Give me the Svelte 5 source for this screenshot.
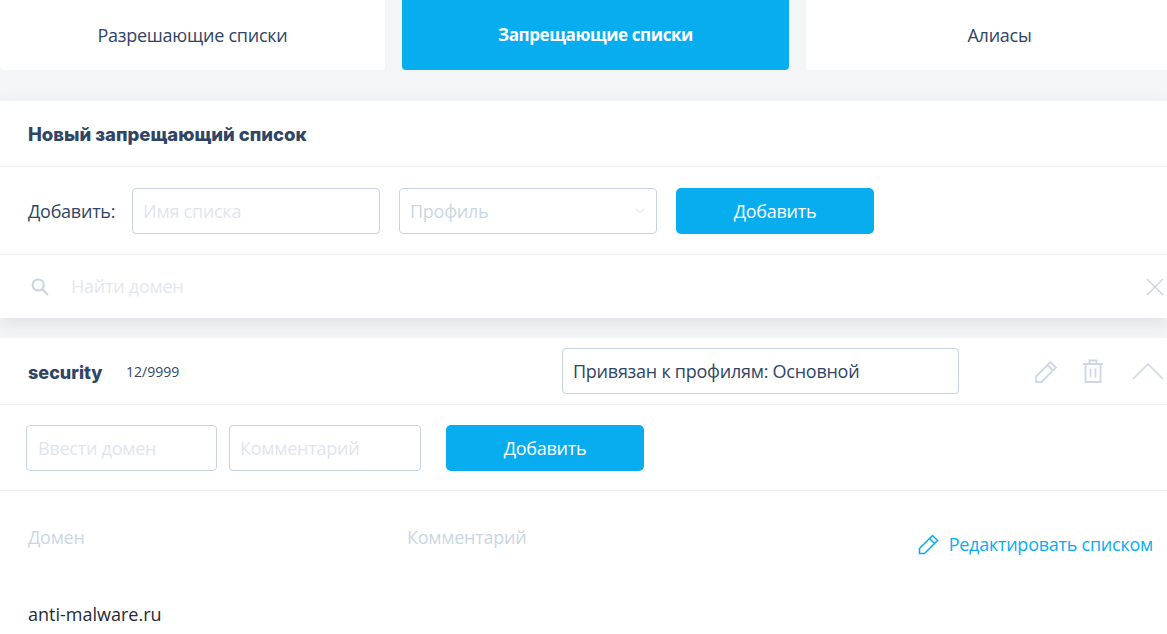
<script>
  const tabs = [
    { label: 'Разрешающие списки', active: false },
    { label: 'Запрещающие списки', active: true },
    { label: 'Алиасы', active: false }
  ]
</script>

<div class="page">
  <div class="tabs">
    {#each tabs as tab}
      <div class="tab" class:active={tab.active}>{tab.label}</div>
    {/each}
  </div>

  <section class="card new-list">
    <div class="title-row">
      <h2>Новый запрещающий список</h2>
    </div>
    <div class="add-row">
      <span class="add-label">Добавить:</span>
      <input class="field name" placeholder="Имя списка" />
      <div class="field select">
        <span>Профиль</span>
        <svg width="12" height="8" viewBox="0 0 12 8"><path d="M1.5 1.5 6 6l4.5-4.5" fill="none" stroke="#e3e8f0" stroke-width="1.2" /></svg>
      </div>
      <button class="btn wide">Добавить</button>
    </div>
    <div class="search-row">
      <svg class="search-icon" width="20" height="20" viewBox="0 0 20 20">
        <circle cx="8.2" cy="8" r="5.6" fill="none" stroke="#c9d4e3" stroke-width="2" />
        <path d="M12.2 12.2 18 18" fill="none" stroke="#c9d4e3" stroke-width="2" />
      </svg>
      <span class="search-text">Найти домен</span>
      <svg class="close" width="18" height="18" viewBox="0 0 18 18">
        <path d="M1 1l16 16M17 1 1 17" fill="none" stroke="#c9d4e3" stroke-width="1.4" />
      </svg>
    </div>
  </section>

  <section class="card list">
    <div class="list-head">
      <strong class="list-name">security</strong>
      <span class="count">12/9999</span>
      <div class="field bound">Привязан к профилям: Основной</div>
      <div class="icons">
        <svg width="24" height="24" viewBox="0 0 24 24">
          <path d="M2 17.5 16.5 3 22 8.5 7.500 23H2ZM13.500 6l5.500 5.500" fill="none" stroke="#cdd7e5" stroke-width="1.8" />
        </svg>
        <svg class="trash" width="20" height="24" viewBox="0 0 20 24">
          <path d="M0 5h20M6.500 5V1.500h7V5M2.500 5v18h15V5M7.500 9.500v9M12.500 9.500v9" fill="none" stroke="#cdd7e5" stroke-width="1.800" />
        </svg>
        <svg class="chev" width="32" height="18" viewBox="0 0 32 18">
          <path d="M1 17 16 2l15 15" fill="none" stroke="#cdd7e5" stroke-width="1.500" />
        </svg>
      </div>
    </div>
    <div class="domain-row">
      <input class="field domain" placeholder="Ввести домен" />
      <input class="field comment" placeholder="Комментарий" />
      <button class="btn">Добавить</button>
    </div>
    <div class="table-head">
      <span class="col-domain">Домен</span>
      <span class="col-comment">Комментарий</span>
      <a class="edit" href="#edit">
        <svg width="22" height="22" viewBox="0 0 22 22">
          <path d="M1.500 15.500 14.500 2.500 19.500 7.500 6.500 20.500H1.500ZM11.500 5.500l5 5" fill="none" stroke="#08adef" stroke-width="1.500" />
        </svg>
        Редактировать списком
      </a>
    </div>
    <div class="domain-item">anti-malware.ru</div>
  </section>
</div>

<style>
  :global(body) {
    margin: 0;
    background: #f4f5f7;
    font-family: 'Open Sans', 'Noto Sans', sans-serif;
    overflow: hidden;
  }

  .page {
    height: 634px;
    overflow: hidden;
    font-size: 18px;
    letter-spacing: -0.25px;
    color: #2f4565;
  }

  .tabs {
    display: grid;
    grid-template-columns: 385px 387px 387px;
    gap: 17px;
    margin-bottom: 31px;
  }

  .tab {
    height: 70px;
    line-height: 70px;
    text-align: center;
    background: #fff;
    border-radius: 0 0 4px 4px;
    color: #2f4565;
  }

  .tab.active {
    background: #08adef;
    color: #fff;
    font-size: 17px;
    font-weight: 700;
    letter-spacing: -0.4px;
  }

  .card {
    background: #fff;
  }

  .new-list {
    box-shadow: 0 6px 16px rgba(40, 60, 90, 0.1);
    margin-bottom: 20px;
  }

  .title-row {
    height: 65px;
    padding-left: 28px;
    display: flex;
    align-items: center;
    border-bottom: 1px solid #ebeef2;
  }

  h2 {
    margin: 0;
    font-family: Inter, sans-serif;
    font-size: 18.5px;
    font-weight: 800;
    letter-spacing: 0;
    color: #2f4565;
  }

  .add-row {
    height: 88px;
    box-sizing: border-box;
    padding-left: 28px;
    display: flex;
    align-items: center;
    border-bottom: 1px solid #ebeef2;
  }

  .add-label {
    width: 104px;
  }

  .field {
    box-sizing: border-box;
    height: 46px;
    padding: 0 10px;
    border: 1px solid #c5d2e3;
    border-radius: 4px;
    background: #fff;
    font: inherit;
    letter-spacing: inherit;
    color: #2f4565;
    outline: none;
  }

  .field::placeholder {
    color: #dfe5ef;
    opacity: 1;
  }

  .name {
    width: 248px;
    margin-right: 19px;
  }

  .select {
    width: 258px;
    margin-right: 19px;
    display: flex;
    align-items: center;
    justify-content: space-between;
    color: #cbd6e5;
  }

  .btn {
    width: 198px;
    height: 46px;
    border: none;
    border-radius: 5px;
    background: #08adef;
    color: #fff;
    font: inherit;
    letter-spacing: inherit;
  }

  .search-row {
    height: 63px;
    padding: 0 4px 0 30px;
    display: flex;
    align-items: center;
  }

  .search-text {
    margin-left: 21px;
    padding-bottom: 2px;
    color: #e3e8f0;
    flex: 1;
  }

  .close {
    margin-right: -1px;
  }

  .list {
    height: 320px;
  }

  .list-head {
    height: 67px;
    box-sizing: border-box;
    padding-left: 28px;
    display: flex;
    align-items: center;
    border-bottom: 1px solid #ebeef2;
  }

  .list-name {
    width: 98px;
    padding-top: 2px;
    font-family: Inter, sans-serif;
    font-size: 18px;
    font-weight: 800;
    letter-spacing: 0;
  }

  .count {
    width: 436px;
    font-size: 14px;
    letter-spacing: 0;
  }

  .bound {
    width: 397px;
    display: flex;
    align-items: center;
  }

  .icons {
    display: flex;
    align-items: center;
    margin-left: 75px;
    gap: 25px;
  }

  .chev {
    margin-left: 4px;
  }

  .domain-row {
    height: 86px;
    box-sizing: border-box;
    padding-left: 26px;
    display: flex;
    align-items: center;
    border-bottom: 1px solid #ebeef2;
  }

  .domain {
    width: 191px;
    margin-right: 12px;
    padding-left: 11px;
  }

  .comment {
    width: 192px;
    margin-right: 25px;
  }

  .table-head {
    display: flex;
    align-items: flex-start;
    padding: 34px 14px 0 28px;
    color: #cbd6e5;
  }

  .col-domain {
    width: 379px;
  }

  .col-comment {
    flex: 1;
  }

  .edit {
    display: flex;
    align-items: center;
    gap: 9px;
    margin-top: 7px;
    color: #08adef;
    text-decoration: none;
  }

  .domain-item {
    padding: 46px 0 0 28px;
    letter-spacing: 0;
    color: #1f2a3a;
  }
</style>
